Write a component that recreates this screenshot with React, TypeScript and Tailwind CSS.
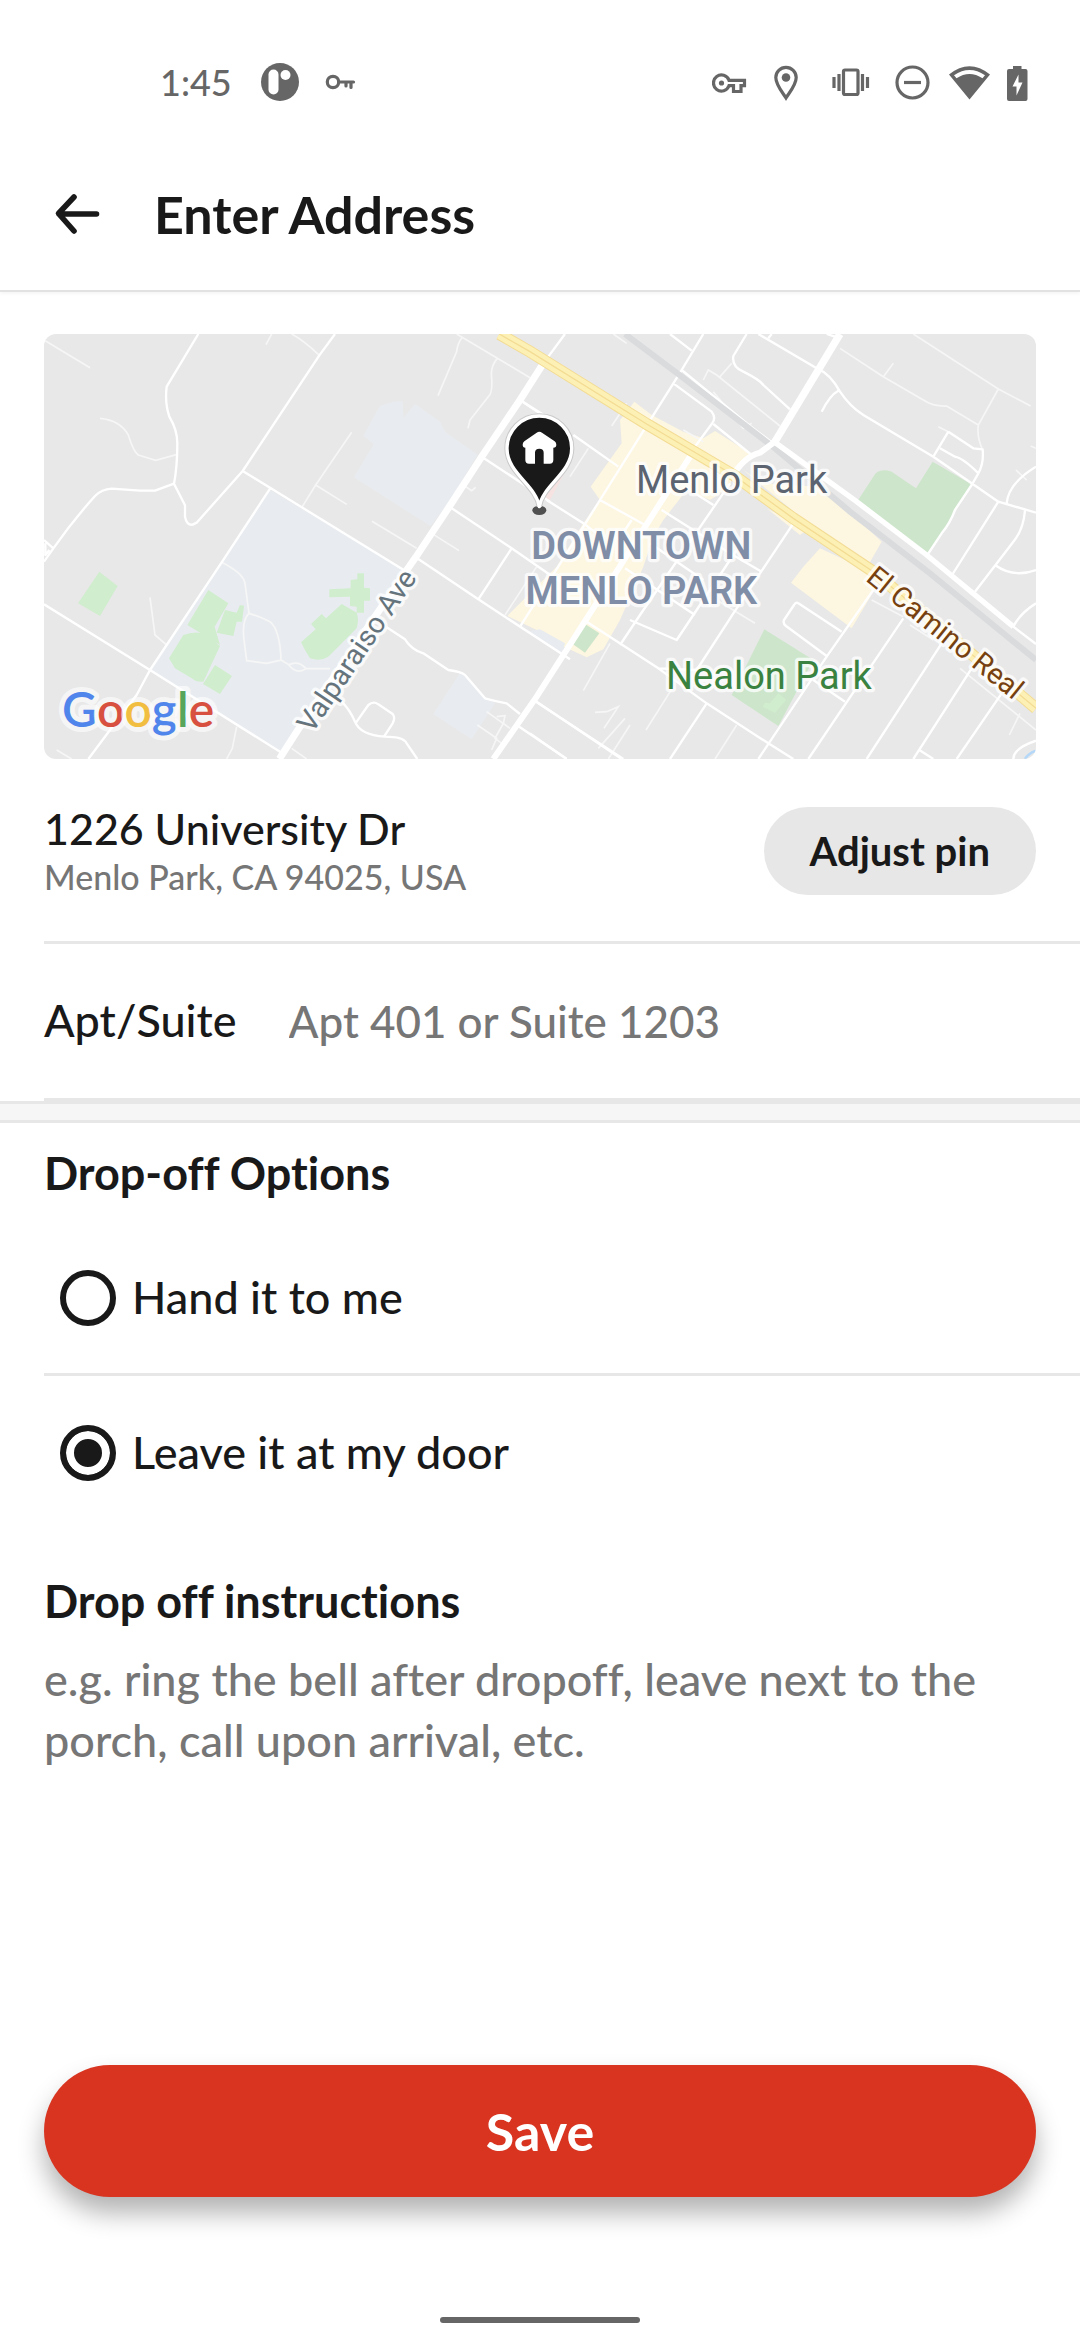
import { useState } from "react";

const StatusBar = () => {
  return (
    <div className="flex items-center justify-between pt-13 pl-40 pr-13 text-[#666]">
      <div className="flex items-center h-15">
        <span className="text-[36px] leading-15">1:45</span>
        <svg className="ml-7 size-10" viewBox="0 0 40 40" aria-hidden="true">
          <circle cx="20" cy="20" r="19" fill="currentColor" />
          <rect x="8.500" y="7.500" width="10" height="25" rx="5" fill="#fff" />
          <circle cx="25.500" cy="13" r="5" fill="#fff" />
        </svg>
        <svg className="ml-6 w-8 h-6" viewBox="0 0 32 24" aria-hidden="true">
          <circle cx="9" cy="12" r="5.7" fill="none" stroke="currentColor" strokeWidth="3.2" />
          <path
            d="M15 12H29.500M22 12V16M27 12V17.500"
            fill="none"
            stroke="currentColor"
            strokeWidth="3.2"
            strokeLinecap="round"
          />
        </svg>
      </div>

      <svg className="w-[316px] h-10" viewBox="0 0 316 40" aria-hidden="true">
        <g fill="none" stroke="currentColor" strokeWidth="3.2">
          {/* vpn key */}
          <path d="M17 18.300A8 8 0 1 0 17 23.700H21.500V29.500H29V23.700H32.500V18.300Z" />
          {/* location */}
          <path d="M74 36C71 31 63.800 23 63.800 15.500A10.200 10.200 0 0 1 84.200 15.500C84.200 23 77 31 74 36Z" />
          {/* vibrate */}
          <rect x="131.500" y="8" width="14.500" height="24.500" rx="1.500" />
          <path d="M127 12V29M122 15V26M150.500 12V29M155.500 15V26" />
          {/* do not disturb */}
          <circle cx="200.500" cy="20.500" r="15.500" />
          <path d="M192 20.500H209" />
        </g>
        <circle cx="9.500" cy="21" r="2.600" fill="currentColor" />
        <circle cx="74" cy="15.500" r="4.300" fill="currentColor" />
        <path
          fill="currentColor"
          fillRule="evenodd"
          d="M237 12.500Q257.500 -4 278 12.500L257.500 37.500ZM242 13.300L244.500 16.300Q257.500 7.500 270.500 16.300L273 13.300Q257.500 2.500 242 13.300Z"
        />
        <path
          fill="currentColor"
          fillRule="evenodd"
          d="M301 4H309.500V7H313.500Q315.500 7 315.500 9V37Q315.500 39 313.500 39H297Q295 39 295 37V9Q295 7 297 7H301ZM306.500 12.500L300.500 24.500H304.500V33.500L310.500 20.500H306.500Z"
        />
      </svg>
    </div>
  );
};

const Header = () => {
  return (
    <header className="flex items-center pt-18 pb-[46px] pl-13 border-b-2 border-[#e2e2e2] shadow-[0_2px_3px_rgba(0,0,0,0.04)]">
      <button type="button" aria-label="Back" className="w-[102px]">
        <svg className="w-[50px] h-[44px]" viewBox="0 0 50 44" aria-hidden="true">
          <path
            d="M44.500 22H7M22 5L6.500 21.500L22 39"
            fill="none"
            stroke="#191919"
            strokeWidth="5.6"
            strokeLinecap="round"
            strokeLinejoin="round"
          />
        </svg>
      </button>
      <h1 className="text-[52px] leading-15 font-bold">Enter Address</h1>
    </header>
  );
};

const mapLabel = "[paint-order:stroke] [stroke-linejoin:round] stroke-white/75 stroke-[20px]";

const AddressMap = () => {
  return (
    <svg
      className="block w-full rounded-xl"
      viewBox="0 0 2976 1275"
      role="img"
      aria-label="Map of Menlo Park"
      fontFamily="Roboto, sans-serif"
      fontWeight="400"
    >
      <rect width="2976" height="1275" fill="#e8e8e8" />

      {/* areas, west side */}
      <g transform="translate(-12 -42)">
        <path fill="#e8ecf0" d="M690 510L1095 752L1060 810L727 1295L330 1050L545 727Z" />
        <path
          fill="#e8ecf0"
          d="M1060 245L1088 243L1090 295L1125 252L1200 305L1215 335L1312 404L1228 545L1172 618L942 472L1002 372L970 348L1020 258ZM1258 1062L1275 1065L1335 1135L1365 1150L1295 1258L1180 1182Z"
        />
        <path
          fill="#d0edcd"
          d="M178 755L233 798L180 888L114 850ZM505 810L565 850L524 920L540 975L442 915ZM555 870L590 878L600 855L612 857L606 905L590 905L580 948L530 938ZM430 945Q470 930 500 945L540 978L490 1085Q470 1088 455 1075L405 1045L387 1015ZM525 1035L576 1068L540 1122L489 1092ZM952 760L972 760V803L990 805V842H972V878H950V860L930 858V830L868 832V808L932 805V780L952 778ZM905 852L950 878Q958 900 950 925L865 1010Q840 1025 810 1015L795 990L783 967L827 928L813 912L845 882L858 895Z"
        />
      </g>

      {/* areas, east side */}
      <g transform="translate(1458 -42)">
        <path
          fill="#fdf6e0"
          d="M313 245L365 285L460 335L520 355L555 333L660 400L610 450L600 500L540 540L470 510L400 600L370 650L340 740L270 900L220 988L170 1012L80 970L20 930L-68 888L80 740L160 610L210 540L182 500L275 370L270 300ZM640 450L700 490L860 500L910 530L1055 665L1015 735L870 640ZM710 565L830 630L810 645ZM870 685L1030 760L1045 790L965 925L783 788L820 740Z"
        />
        <path fill="#e8ecf0" d="M30 928L105 970L95 1000L-10 935Z" />
        <path fill="#f6e3e1" d="M103 460L60 540L40 530Z" />
        <path
          fill="#cde6cb"
          d="M983 542L1030 470Q1045 442 1085 455L1158 505L1208 425L1323 492L1275 570Q1260 610 1235 640L1190 705ZM703 928L850 1020L745 1218L605 1125ZM165 912L208 940L165 998L128 972Z"
        />
        <path fill="#d0edcd" d="M745 1120L768 1140L735 1178L698 1160L705 1148L720 1150Z" />
      </g>

      {/* small lanes */}
      <g fill="none" stroke="#f6f6f6" strokeWidth="5">
        <g transform="translate(-12 -42)">
          <path d="M12 60L150 143M180 295Q240 300 265 345Q280 395 295 405L347 421L412 403M678 74L695 42M755 42Q790 60 838 106M1250 42L1470 173M1268 50Q1252 70 1250 95L1194 227M1372 115Q1350 140 1355 175Q1358 220 1345 230L1290 300L1284 325M935 337L827 495L787 560M827 495L920 553M996 604L1130 685M1175 640L1257 692M330 832L345 945L380 975M545 727Q610 760 615 790L627 880Q605 900 612 960L620 1022L680 1030L723 1020Q720 930 690 905Q660 890 627 880M723 1020L746 1034Q775 1020 798 1046L870 1046M746 1034Q770 1065 798 1046M590 1220L577 1285L560 1317M50 1290L95 1317M755 1285L800 1317M1270 495L1295 512L1307 502M1395 885L1490 740M1340 1175L1410 1225M1370 1190L1395 1187L1390 1210L1365 1255L1385 1270M1312 1215L1370 1255L1355 1290" />
        </g>
        <g transform="translate(1458 -42)">
          <path d="M930 85L1060 170L1180 240Q1210 260 1250 258L1345 315M1150 42L1405 207L1502 258M1405 207L1345 315Q1340 350 1357 388M1060 170L1090 130M1225 320L1255 335M1502 378L1518 385M1458 450L1490 480M250 42L290 70M245 318L290 250M175 385L120 470M520 180L535 150L560 165L750 318M570 170L605 130M240 970L160 1112M195 1177L230 1175L265 1160L222 1225M285 1195L205 1285M300 1215L235 1317M430 1100L348 1230M620 1215L555 1317M560 840L675 910M1025 840L1120 890M1140 915L1210 960M1290 1045L1518 1230M1470 1180L1438 1245M460 330L520 365M550 215L640 325L665 310" />
        </g>
      </g>

      {/* streets */}
      <g fill="none" stroke="#fff" strokeWidth="7" strokeLinejoin="round">
        <g transform="translate(-12 -42)">
          <path d="M475 42L380 200Q374 250 388 290Q412 330 412 370Q412 440 402 491L345 512L300 512L215 506Q185 508 165 528Q100 600 40 685L12 725M12 660L40 685M16 670V705L28 690M402 491L435 556V590Q440 616 458 614L470 608L608 453L838 106L885 42M608 453L1095 752M690 506L545 727L330 1050L290 1125L210 1230L145 1317M12 853L330 1050L727 1300M1440 240L1530 297M1325 410L1530 545M1228 560L1415 685L1560 785M1127 712L1315 838L1590 1018M1415 685L1315 838M1040 922L1095 958Q1115 990 1150 1000L1225 1050Q1265 1055 1275 1065L1335 1135Q1370 1145 1400 1150L1440 1182M905 1145Q930 1170 945 1205Q960 1245 1035 1250Q1090 1250 1100 1270L1132 1317M948 1208L985 1155Q1000 1142 1015 1153L1058 1182Q1067 1192 1058 1210L1032 1250M1480 1140L1750 1317M1430 1215L1580 1317" />
        </g>
        <g transform="translate(1458 -42)">
          <path d="M105 42L40 130M-30 240L60 300M130 345L265 440M50 540L160 610L200 640M520 42L455 150L430 190L345 325L210 540L110 700L-30 920M420 42L485 92M210 540L345 615M305 600L265 660M455 150L660 318L750 385M430 190L545 275Q560 295 545 312L480 400M550 312L665 405M650 42L610 108Q605 140 640 155Q690 180 700 195L780 268M725 42L715 55M685 42L860 145Q900 160 930 215Q960 260 1000 285L1210 410L1405 545L1518 578M890 42L915 50M925 212Q900 225 875 275M1255 335L1330 385L1358 388Q1362 430 1345 460L1325 495L1275 570Q1260 610 1235 640L1192 705M1255 335L1210 410M1230 385L1275 410Q1300 415 1345 460M1518 440Q1435 490 1430 550M1405 545L1268 762M1485 572Q1480 630 1450 665L1335 815M1395 735Q1450 775 1518 750M1518 850Q1470 880 1450 920L1518 972M12 1140L275 1317M0 1240L110 1317M170 905L385 1045L530 1150L715 1270L790 1317M285 745L495 885M360 670L520 780M480 510L550 555M395 570L600 700L695 755M270 975L330 885L600 490M300 900L440 960L620 690M790 610L610 880L500 1050L385 1045M530 1150L420 1317M935 935L805 850Q798 845 792 855L762 900Q758 910 768 918L890 1008M1030 810L890 1010L685 1317M850 1080L945 1145M1120 895L835 1317M1235 970L1010 1317M1325 1045L1150 1317M1415 1120L1280 1317M1168 1290L1210 1317M1518 1262Q1450 1285 1450 1317" />
        </g>
      </g>

      <g transform="translate(1458 -42)" fill="none">
        {/* railway */}
        <path stroke="#d9dbdd" strokeWidth="18" d="M285 42L455 170L735 385L960 575L1200 760L1518 1020" />

        {/* avenues */}
        <g stroke="#fff">
          <path strokeWidth="21" d="M40 130L-30 240L-145 410L-242 560L-343 712L-380 765L-690 1220L-752 1317" />
          <path strokeWidth="18" d="M-110 1317L20 1130L180 880L390 550L480 410" />
          <path strokeWidth="22" d="M930 42L735 365" />
          <path strokeWidth="16" d="M725 360L980 545L1190 705L1450 920" />
          <path strokeWidth="18" d="M735 365L690 398Q640 410 600 480" />
        </g>

        {/* highway */}
        <path stroke="#f3dc94" strokeWidth="36" d="M-92 42L0 95L350 312L610 465L790 595L1030 755L1518 1165" />
        <path stroke="#fdf0b5" strokeWidth="30" d="M-92 42L0 95L350 312L610 465L790 595L1030 755L1518 1165" />
        <path stroke="#f3dc94" strokeWidth="4" d="M-92 42L0 95L350 312L610 465L790 595L1030 755L1518 1165" />
        <path stroke="#b5d8f8" strokeWidth="8" d="M1485 1317Q1495 1300 1518 1292" />
      </g>

      <g className="text-[114px]">
        <text className={mapLabel} x="1776" y="477" fill="#5b6470">Menlo Park</text>
        <text className={mapLabel} x="1866" y="1066" fill="#3a8240">Nealon Park</text>
        <g fontWeight="600" fill="#808da6" textAnchor="middle">
          <text className={mapLabel} x="1792" y="674">DOWNTOWN</text>
          <text className={mapLabel} x="1792" y="810">MENLO PARK</text>
        </g>
      </g>
      <g className="text-[86px]">
        <text className={mapLabel} transform="translate(804 1201) rotate(-56)" fill="#65747c">
          Valparaiso Ave
        </text>
        <text className={mapLabel} transform="translate(2462 738) rotate(39)" fill="#77410f">
          El Camino Real
        </text>
      </g>

      {/* attribution */}
      <text
        className="[paint-order:stroke] [stroke-linejoin:round] stroke-white/60 stroke-[30px] text-[144px] font-semibold"
        x="54"
        y="1180"
        fontFamily="Lato, sans-serif"
      >
        <tspan fill="#5086ec">G</tspan>
        <tspan fill="#d85040">o</tspan>
        <tspan fill="#f2be42">o</tspan>
        <tspan fill="#5086ec">g</tspan>
        <tspan fill="#58a55c">l</tspan>
        <tspan fill="#d85040">e</tspan>
      </text>

      {/* home pin */}
      <g transform="translate(1458 -42)">
        <ellipse cx="28" cy="571" rx="21" ry="14" fill="#505050" />
        <path
          d="M28 560C18 495 -69 460 -69 385A97 97 0 1 1 125 385C125 460 38 495 28 560Z"
          fill="#fff"
          stroke="#c9c9c9"
          strokeWidth="16"
        />
        <path
          d="M28 560C18 495 -69 460 -69 385A97 97 0 1 1 125 385C125 460 38 495 28 560Z"
          fill="#191919"
          stroke="#fff"
          strokeWidth="10"
          strokeLinejoin="round"
        />
        <path
          fill="#fff"
          d="M20 338Q28 332 36 338L74 364Q79 368 79 374Q79 383 70 383V420Q70 431 59 431H41V398Q41 386 28 386Q15 386 15 398V431H-3Q-14 431 -14 420V383Q-22 383 -22 374Q-22 368 -17 364Z"
        />
      </g>
    </svg>
  );
};

const options = [
  { id: "hand", label: "Hand it to me" },
  { id: "door", label: "Leave it at my door" },
];

export default function App() {
  const [dropOff, setDropOff] = useState("door");

  return (
    <main className="flex flex-col min-h-screen bg-white text-[#191919] font-[Lato,sans-serif] font-medium [font-variant-ligatures:no-common-ligatures]">
      <StatusBar />
      <Header />

      <section className="px-11 pt-[42px]">
        <AddressMap />
        <div className="flex items-center justify-between pt-11 pb-[42px]">
          <div>
            <p className="text-[43px] leading-[52px]">1226 University Dr</p>
            <p className="text-[34px] leading-11 text-[#767676]">Menlo Park, CA 94025, USA</p>
          </div>
          <button type="button" className="h-22 px-[46px] rounded-full bg-[#e7e7e7] text-[40px] font-bold">
            Adjust pin
          </button>
        </div>
      </section>

      <div className="flex items-center ml-11 h-[154px] border-y-3 border-[#e7e7e7] box-content text-[45px]">
        <label htmlFor="apt" className="shrink-0">
          Apt/Suite
        </label>
        <input
          id="apt"
          type="text"
          placeholder="Apt 401 or Suite 1203"
          className="flex-1 min-w-0 ml-13 outline-none text-[44px] placeholder:text-[#767676]"
        />
      </div>
      <div className="h-[22px] border-y-3 border-[#e7e7e7] bg-[#f6f6f6]" />

      <fieldset>
        <legend className="pl-11 pt-5 text-[45px] leading-15 font-bold">Drop-off Options</legend>
        <div className="ml-11 pt-5 divide-y-3 divide-[#e7e7e7]">
          {options.map((option) => (
            <label key={option.id} className="flex items-center h-[153px] pl-4 gap-4 text-[45px]">
              <input
                type="radio"
                name="drop-off"
                value={option.id}
                checked={dropOff === option.id}
                onChange={() => setDropOff(option.id)}
                className="appearance-none size-14 rounded-full border-6 border-[#191919] checked:bg-[#191919] checked:shadow-[inset_0_0_0_8px_#fff]"
              />
              {option.label}
            </label>
          ))}
        </div>
      </fieldset>

      <section className="px-11 pt-[42px]">
        <label htmlFor="instructions" className="block text-[45px] leading-15 font-bold">
          Drop off instructions
        </label>
        <textarea
          id="instructions"
          rows={2}
          placeholder="e.g. ring the bell after dropoff, leave next to the porch, call upon arrival, etc."
          className="block w-full mt-[18px] resize-none outline-none text-[45px] leading-[61px] placeholder:text-[#767676]"
        />
      </section>

      <div className="mt-auto px-11">
        <button
          type="button"
          className="block w-full h-33 rounded-full bg-[#d83420] text-white text-[52px] font-bold shadow-[0_16px_26px_rgba(0,0,0,0.3)]"
        >
          Save
        </button>
        <div className="mx-auto mt-30 mb-[17px] w-50 h-[6px] rounded-full bg-[#666]" />
      </div>
    </main>
  );
}
